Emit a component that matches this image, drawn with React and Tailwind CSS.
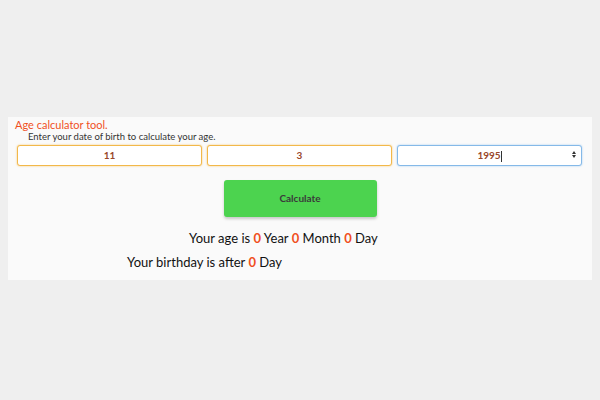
const font = { fontFamily: '"Comic Sans MS", Lato, "DejaVu Sans", sans-serif' };

const Num = ({ children }) => (
  <span className="text-[#f0501e] font-bold">{children}</span>
);

export default function App() {
  return (
    <div className="w-[600px] h-[400px] bg-[#efefef] pt-[117px] px-2" style={font}>
      <div className="bg-[#fafafa] h-[163px]">
        <div className="pl-[7px] pt-[1px] text-[11px] leading-[13px] text-[#f0501e]">
          Age calculator tool.
        </div>
        <div className="pl-[20px] text-[9.5px] leading-[11px] text-[#333]">
          Enter your date of birth to calculate your age.
        </div>
        <div className="grid grid-cols-3 gap-[5px] pl-[9px] pr-[10px] mt-[3px]">
          <div className="h-[21px] rounded-[3px] border border-solid border-[#f2b84a] shadow-[0_0_2px_#f5c46a] bg-white flex items-center justify-center text-[10px] font-bold text-[#99482a]">
            11
          </div>
          <div className="h-[21px] rounded-[3px] border border-solid border-[#f2b84a] shadow-[0_0_2px_#f5c46a] bg-white flex items-center justify-center text-[10px] font-bold text-[#99482a]">
            3
          </div>
          <div className="relative h-[21px] rounded-[3px] border border-solid border-[#85b9e8] shadow-[0_0_2px_#9cc8ef] bg-white flex items-center justify-center text-[10px] font-bold text-[#99482a]">
            <span>
              1995<span className="inline-block w-px h-[11px] bg-[#333] align-middle" />
            </span>
            <div className="absolute right-[5px] top-[5px] flex flex-col items-center gap-[1px]">
              <div className="w-0 h-0 border-l-[2.5px] border-r-[2.5px] border-b-[3px] border-l-transparent border-r-transparent border-b-[#333]" />
              <div className="w-0 h-0 border-l-[2.5px] border-r-[2.5px] border-t-[3px] border-l-transparent border-r-transparent border-t-[#333]" />
            </div>
          </div>
        </div>
        <div className="flex justify-center mt-[14px]">
          <button className="w-[153px] h-[37px] rounded-[3px] bg-[#4cd34f] shadow-[0_2px_3px_rgba(0,0,0,0.2)] text-[10px] font-bold text-[#3a3a3a]">
            Calculate
          </button>
        </div>
        <div className="mt-[13px] pl-[181px] text-[13px] leading-[16px] text-[#111]">
          Your age is <Num>0</Num> Year <Num>0</Num> Month <Num>0</Num> Day
        </div>
        <div className="mt-[8px] pl-[119px] text-[13px] leading-[16px] text-[#111]">
          Your birthday is after <Num>0</Num> Day
        </div>
      </div>
    </div>
  );
}
